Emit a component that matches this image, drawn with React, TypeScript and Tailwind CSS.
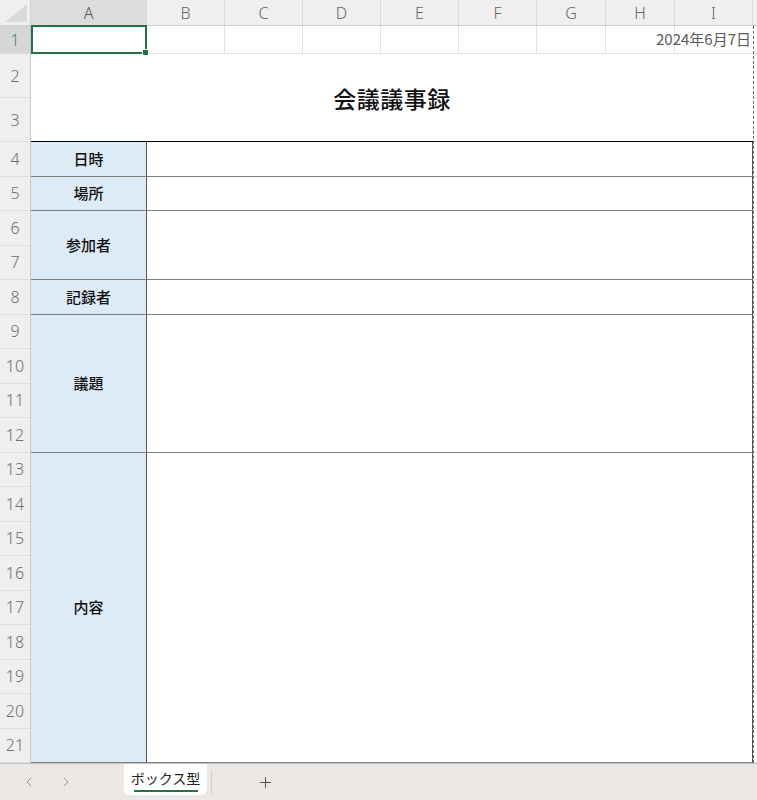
import { ChevronLeft, ChevronRight, Plus } from "lucide-react";

const JP = "font-['Noto_Sans_CJK_JP','Noto_Sans',sans-serif]";

const headers = [
  { l: "A", w: "w-[116px]", sel: true },
  { l: "B", w: "w-[78px]" },
  { l: "C", w: "w-[78px]" },
  { l: "D", w: "w-[78px]" },
  { l: "E", w: "w-[78px]" },
  { l: "F", w: "w-[78px]" },
  { l: "G", w: "w-[69px]" },
  { l: "H", w: "w-[69px]" },
  { l: "I", w: "w-[78px]" },
];

const rowHeads = [
  { n: 1, h: "h-[28px]" },
  { n: 2, h: "h-[44px]" },
  { n: 3, h: "h-[44px]" },
  ...Array.from({ length: 18 }, (_, i) => ({ n: i + 4, h: "h-[34.5px]" })),
];

const groups = [
  { label: "日時", h: "h-[34.5px]" },
  { label: "場所", h: "h-[34.5px]" },
  { label: "参加者", h: "h-[69px]" },
  { label: "記録者", h: "h-[34.5px]" },
  { label: "議題", h: "h-[138px]" },
  { label: "内容", h: "h-[310.5px]" },
];

export default function App() {
  return (
    <div className={`w-[757px] h-[800px] overflow-hidden bg-white flex flex-col ${JP}`}>
      {/* column header */}
      <div className="flex h-[26px] bg-[#efefef] border-b border-[#d0d0d0] shrink-0">
        <div className="w-[31px] h-full border-r border-[#d0d0d0] relative">
          <svg className="absolute right-[3px] bottom-[3px]" width="22" height="18" viewBox="0 0 22 18">
            <polygon points="22,0 22,18 0,18" fill="#d9d9d9" />
          </svg>
        </div>
        {headers.map((c) => (
          <div
            key={c.l}
            className={`${c.w} h-full flex items-center justify-center border-r border-[#dadada] text-[16px] font-light font-['Noto_Sans',sans-serif] ${
              c.sel ? "bg-[#dcdcdc] text-[#555]" : "text-[#666]"
            }`}
          >
            {c.l}
          </div>
        ))}
        <div className="flex-1 h-full" />
      </div>

      {/* body */}
      <div className="flex flex-1 min-h-0">
        {/* row headers */}
        <div className="w-[31px] shrink-0 flex flex-col bg-[#efefef] border-r border-[#c8c8c8]">
          {rowHeads.map((r) => (
            <div
              key={r.n}
              className={`${r.h} shrink-0 flex items-center justify-center border-b border-[#dedede] text-[16px] font-light font-['Noto_Sans',sans-serif] ${
                r.n === 1 ? "bg-[#d6d6d6] text-[#3b7f86]" : "text-[#6e6e6e]"
              }`}
            >
              {r.n}
            </div>
          ))}
        </div>

        {/* main columns A-I */}
        <div className="w-[722px] shrink-0 flex flex-col">
          {/* row 1 */}
          <div className="flex h-[28px] shrink-0 border-b border-[#e1e1e1]">
            {headers.map((c, i) => (
              <div key={c.l} className={`${c.w} h-full relative ${i < 8 ? "border-r border-[#e1e1e1]" : ""}`}>
                {i === 0 && (
                  <div className="absolute left-0 top-[-1px] right-[-1px] bottom-[-1px] border-2 border-[#217346]">
                    <div className="absolute right-[-4px] bottom-[-4px] w-[5px] h-[5px] bg-[#217346] border border-white box-content" />
                  </div>
                )}
                {i === 8 && (
                  <div className="absolute right-[2px] top-0 h-full flex items-center text-[15px] text-[#5a5a5a] whitespace-nowrap">
                    2024年6月7日
                  </div>
                )}
              </div>
            ))}
          </div>
          {/* rows 2-3 merged title */}
          <div className="h-[88px] shrink-0 flex items-center justify-center border-b border-black">
            <span className="text-[23px] font-medium text-[#111] tracking-[0.5px] pt-[1px]">会議議事録</span>
          </div>
          {/* table */}
          {groups.map((g) => (
            <div key={g.label} className={`flex ${g.h} shrink-0`}>
              <div className="w-[116px] h-full bg-[#ddebf7] border-r border-[#555] border-b border-b-[#7f7f7f] flex items-center justify-center text-[15px] font-medium text-[#111]">
                {g.label}
              </div>
              <div className="w-[606px] h-full border-b border-[#7f7f7f] border-r border-r-[#555]" />
            </div>
          ))}
        </div>

        {/* extra column beyond I with page break */}
        <div className="flex-1 flex flex-col border-l border-dashed border-[#6a6a6a]">
          {rowHeads.map((r) => (
            <div key={r.n} className={`${r.h} shrink-0 border-b border-[#e1e1e1]`} />
          ))}
        </div>
      </div>

      {/* tab bar */}
      <div className="h-[37px] shrink-0 bg-[#eae7e4] border-t border-[#c4c4c4] flex items-center relative">
        <div className="w-[37px] flex justify-end">
          <ChevronLeft size={16} strokeWidth={1.4} color="#8e8e8e" />
        </div>
        <div className="w-[37px] flex justify-end">
          <ChevronRight size={16} strokeWidth={1.4} color="#8e8e8e" />
        </div>
        <div className="ml-[50px] self-start w-[83px] h-[31px] bg-white rounded-b-[5px] flex flex-col items-center justify-center">
          <span className="text-[14px] text-[#222] leading-[18px] pt-[2px]">ボックス型</span>
          <div className="w-[64px] h-[2px] bg-[#217346] mt-[3px]" />
        </div>
        <div className="ml-[4px] w-px h-[24px] bg-[#d2cecb]" />
        <div className="ml-[45px]">
          <Plus size={17} strokeWidth={1.3} color="#444" />
        </div>
      </div>
    </div>
  );
}
